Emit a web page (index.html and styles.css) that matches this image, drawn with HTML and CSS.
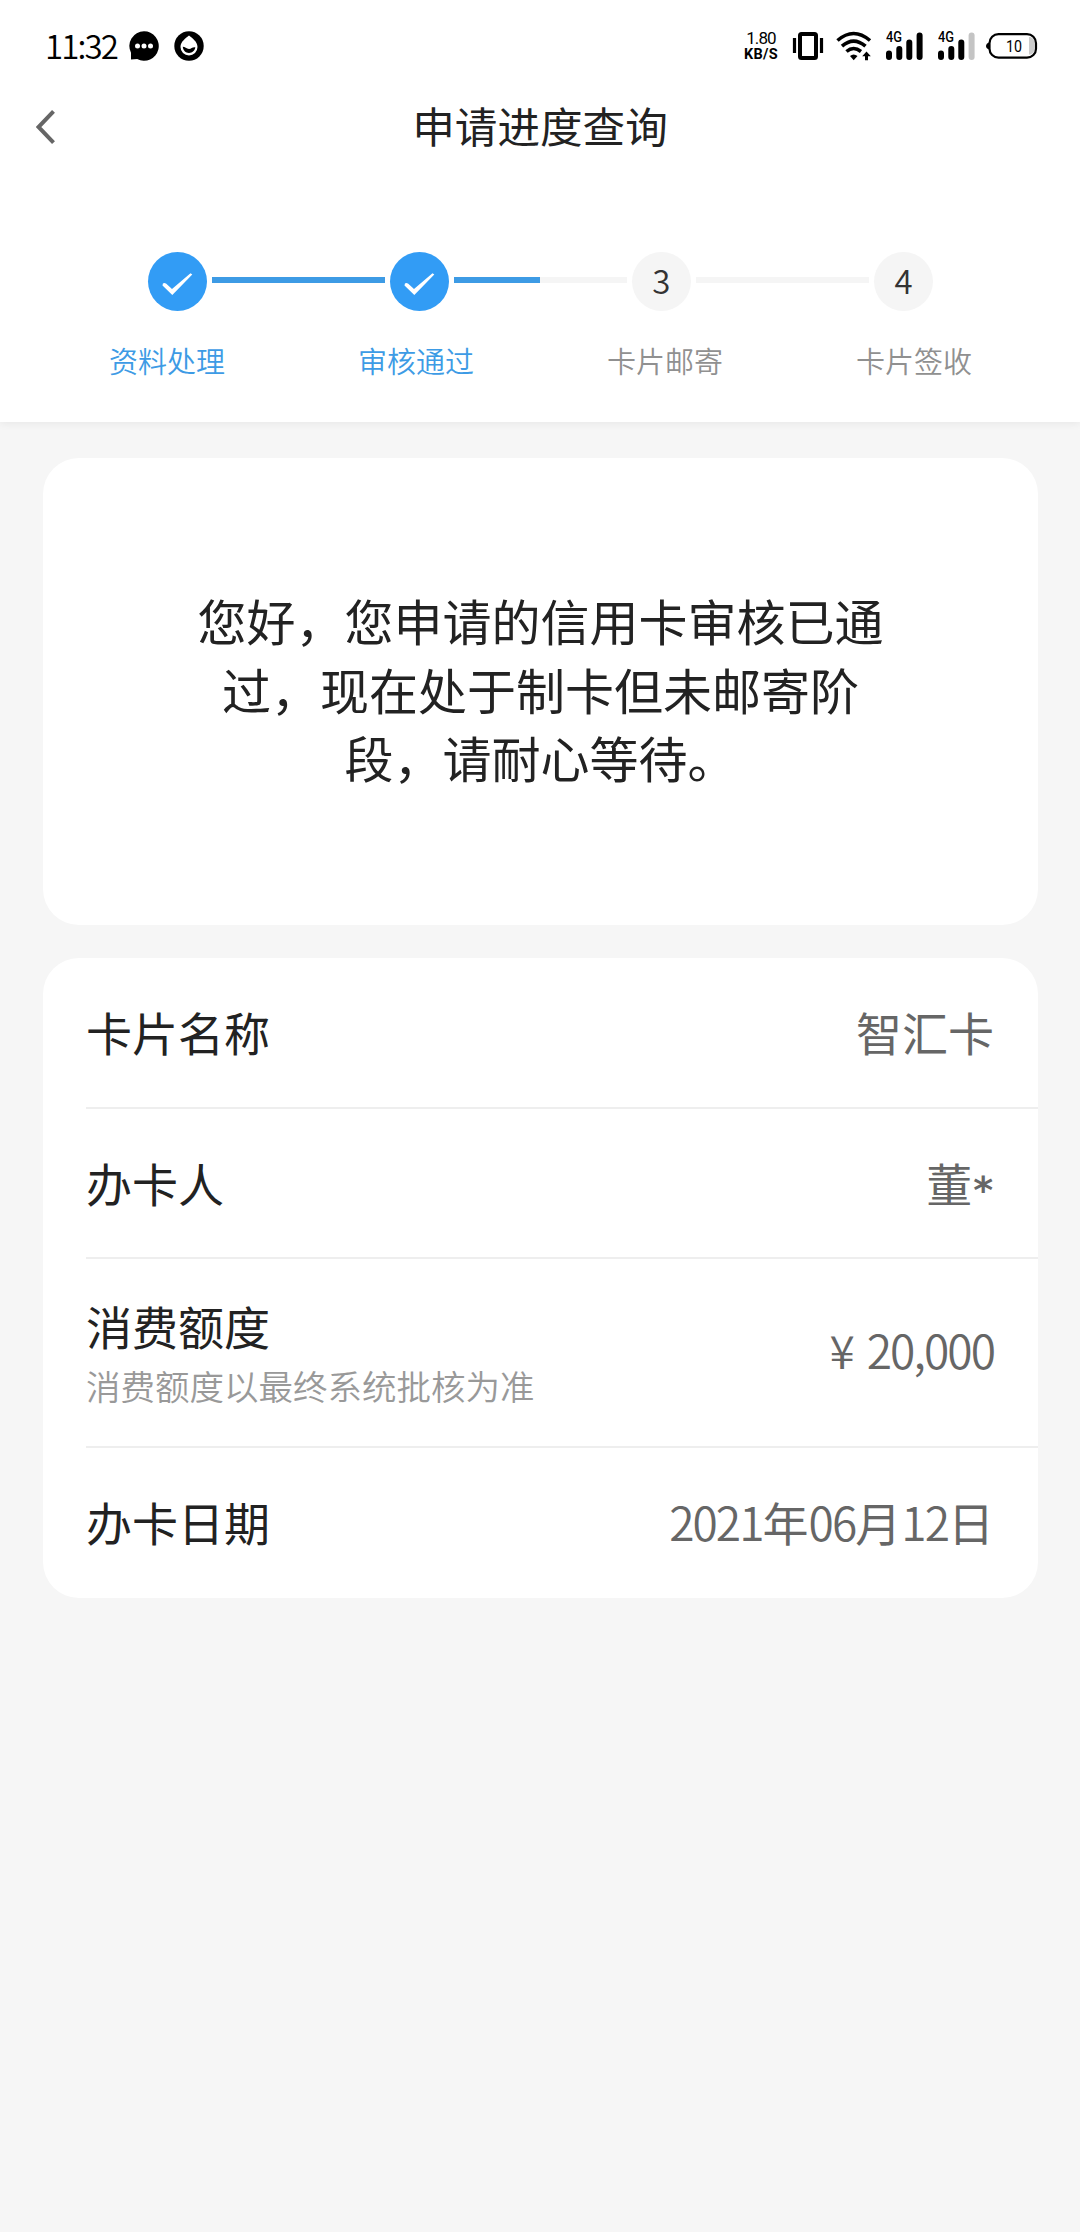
FILE: index.html
```html
<!DOCTYPE html>
<html lang="zh-CN">
<head>
<meta charset="utf-8">
<title>申请进度查询</title>
<link rel="stylesheet" href="styles.css">
</head>
<body>
<header class="top">
  <div class="status">
    <span class="time">11:32</span>
    <svg class="chat" width="30" height="30" viewBox="0 0 30 30"><path d="M15 .3A14.700 14.700 0 1 1 8.200 28L2 28.600V21.800A14.700 14.700 0 0 1 15 .3Z"/><g fill="#fff"><circle cx="8.500" cy="15" r="2.500"/><circle cx="15" cy="15" r="2.500"/><circle cx="21.500" cy="15" r="2.500"/></g></svg>
    <svg class="drop" width="30" height="30" viewBox="0 0 30 30"><circle cx="15" cy="15" r="14.700"/><path fill="#fff" d="M15 4.500C18 7 23.500 10.500 23.500 16a8.500 8.500 0 0 1-17 0C6.500 10.500 12 7 15 4.500Z"/><path d="M8.800 15.800c2.200 0 3.600 2.200 6.200 2.200s3-2 6.300-1.700c-.3 3.400-3 5.600-6.300 5.600s-6-2.300-6.200-6.100Z"/></svg>
    <span class="spacer"></span>
    <span class="speed"><span class="rate">1.80</span><span class="unit">KB/S</span></span>
    <svg class="vibrate" width="32" height="30" viewBox="0 0 32 30"><rect x="8" y="3" width="16" height="24" rx="1.500" fill="none" stroke="#000" stroke-width="4"/><path d="M2.500 7v15M29.500 7v15" stroke="#000" stroke-width="3.200"/></svg>
    <svg class="wifi" width="36" height="30" viewBox="0 0 36 30"><g fill="none" stroke="#000" stroke-width="3.600"><path d="M1.500 9.500Q17.500-4.500 34 9.500"/><path d="M6 15.200Q17.500 5 29.500 15.200"/><path d="M10.500 20.500Q17.500 14.500 25 20.500"/></g><path d="M14 25q3.500-3 7.500 0l-3.800 4.200Z"/><path d="M30.500 20.500l4.300 4.800h-2.800v4h-3v-4h-2.800Z"/></svg>
    <svg class="signal" width="38" height="38" viewBox="0 -4 38 38"><text class="net" x="0" y="11" textLength="16" lengthAdjust="spacingAndGlyphs">4G</text><path d="M3 22.500v3.500M13.300 18v8M23.300 11.500v14.500M33.600 4.500v21.500" class="bar"/></svg>
    <svg class="signal" width="38" height="38" viewBox="0 -4 38 38"><text class="net" x="0" y="11" textLength="16" lengthAdjust="spacingAndGlyphs">4G</text><path d="M3 22.500v3.500M13.300 18v8M23.300 11.500v14.500" class="bar"/><path d="M33.600 4.500v21.500" class="bar off"/></svg>
    <svg class="battery" width="52" height="30" viewBox="0 0 52 30"><path d="M43 6v17.500h1.500q4-1.500 4-6v-5.500q0-4.500-4-6Z" fill="#ccc"/><rect x="3.500" y="3.200" width="46.500" height="23.500" rx="9" fill="none" stroke="#000" stroke-width="2.200"/><path d="M3.500 11.200v7.500q-3.500-1.200-3.500-3.700t3.500-3.800Z"/><text class="level" x="20" y="20.500" textLength="16" lengthAdjust="spacingAndGlyphs">10</text></svg>
  </div>
  <nav class="nav">
    <svg class="back" width="20" height="36" viewBox="0 0 20 36"><path d="M17.500 2.300 2.500 18l15 15.700" fill="none" stroke="#666" stroke-width="4"/></svg>
    <h1 class="title">申请进度查询</h1>
  </nav>
  <div class="track">
    <span class="dot done"><svg width="59" height="59" viewBox="0 0 59 59"><path d="M14.500 33.500Q14.500 30 18 31.500L24 37 42.500 21.300 44.300 22.500 24.300 43Z" fill="#fff"/></svg></span>
    <span class="line on"></span>
    <span class="dot done"><svg width="59" height="59" viewBox="0 0 59 59"><path d="M14.500 33.500Q14.500 30 18 31.500L24 37 42.500 21.300 44.300 22.500 24.300 43Z" fill="#fff"/></svg></span>
    <span class="line half"></span>
    <span class="dot">3</span>
    <span class="line"></span>
    <span class="dot">4</span>
  </div>
  <div class="labels"><span class="cur">资料处理</span><span class="cur">审核通过</span><span>卡片邮寄</span><span>卡片签收</span></div>
</header>
<main class="main">
  <section class="card message"><p>您好，您申请的信用卡审核已通<br>过，现在处于制卡但未邮寄阶<br>段，请耐心等待。</p></section>
  <section class="card info">
    <div class="row"><span class="key">卡片名称</span><span class="val">智汇卡</span></div>
    <div class="row second"><span class="key">办卡人</span><span class="val">董<span class="star">*</span></span></div>
    <div class="row tall"><div class="pair"><span class="key">消费额度</span><span class="note">消费额度以最终系统批核为准</span></div><span class="val money"><span class="yen">¥</span><span class="num">20,000</span></span></div>
    <div class="row last"><span class="key">办卡日期</span><span class="val"><span class="num">2021</span>年<span class="num">06</span>月<span class="num">12</span>日</span></div>
  </section>
</main>
</body>
</html>
```
FILE: styles.css
```css
* { box-sizing: border-box; }
body { margin: 0; min-height: 2232px; background: #f6f6f6; color: #222; font-family: "Noto Sans CJK SC", sans-serif; font-weight: 400; }
svg { display: block; flex: none; }
.top { height: 422px; background: #fff; box-shadow: 0 2px 8px rgba(0, 0, 0, .06); }
.status { display: flex; align-items: center; height: 92px; padding: 0 42px 0 45px; color: #000; }
.time { width: 84px; padding-bottom: 3px; font-size: 33px; line-height: 40px; letter-spacing: -1.900px; font-weight: 350; }
.drop { margin-left: 15px; }
.spacer { flex: 1; }
.speed { display: flex; flex-direction: column; width: 36px; margin-right: 13px; align-items: center; }
.rate { font: 400 17px/15px Roboto, sans-serif; letter-spacing: -.9px; }
.unit { margin-top: 2px; font: 700 14.500px/14px Roboto, sans-serif; letter-spacing: .3px; }
.wifi { margin-left: 12px; }
.signal { margin-left: 14px; }
.battery { margin-left: 10px; }
.net { font: 500 14px Roboto, sans-serif; }
.level { font: 400 17px Roboto, sans-serif; }
.bar { fill: none; stroke: #000; stroke-width: 6; stroke-linecap: round; }
.off { stroke: #c4c4c4; }
.nav { display: grid; grid-template-columns: 100px 1fr 100px; align-items: center; height: 70px; }
.back { margin-left: 36px; }
.title { margin: 0; padding-bottom: 5px; text-align: center; font-size: 42.600px; line-height: 60px; font-weight: 400; }
.track { display: flex; align-items: center; height: 59px; margin: 90px 147px 0 147.500px; }
.dot { flex: none; width: 59px; height: 59px; border-radius: 50%; background: #f5f5f5; color: #333; font-size: 33px; line-height: 56px; text-align: center; font-weight: 350; }
.done { background: #329cf5; }
.line { flex: 1; height: 5.500px; margin: 0 5px 3px; background: #f5f5f5; }
.on { background: #3d9be5; }
.half { background: linear-gradient(90deg, #3d9be5 50%, #f5f5f5 50%); }
.labels { display: flex; justify-content: space-between; padding: 29px 108px 0 109px; font-size: 29px; line-height: 40px; color: #909090; font-weight: 350; }
.cur { color: #3d9be5; }
.main { padding: 36px 42px 0 43px; }
.card { background: #fff; border-radius: 36px; }
.message { height: 467px; padding-top: 128px; text-align: center; }
.message p { margin: 0; font-size: 49px; line-height: 68.500px; }
.info { margin-top: 33px; padding-left: 43px; height: 640px; }
.row { display: flex; align-items: center; justify-content: space-between; height: 151px; padding: 0 44px 4px 0; border-bottom: 2px solid #eee; font-size: 46px; line-height: 60px; }
.second { height: 150px; padding-bottom: 2px; }
.tall { height: 189px; }
.last { height: 150px; border: 0; }
.val { color: #666; }
.pair { display: flex; flex-direction: column; padding-top: 8px; }
.note { font-size: 34.500px; line-height: 60px; color: #999; font-weight: 350; }
.num { letter-spacing: -1.900px; font-weight: 350; }
.yen { margin-right: 12px; font-weight: 350; }
.money { padding-bottom: 4px; }
.star { position: relative; top: 1px; padding: 0 1px; font: 700 38px/1 "DejaVu Sans", sans-serif; }
```
